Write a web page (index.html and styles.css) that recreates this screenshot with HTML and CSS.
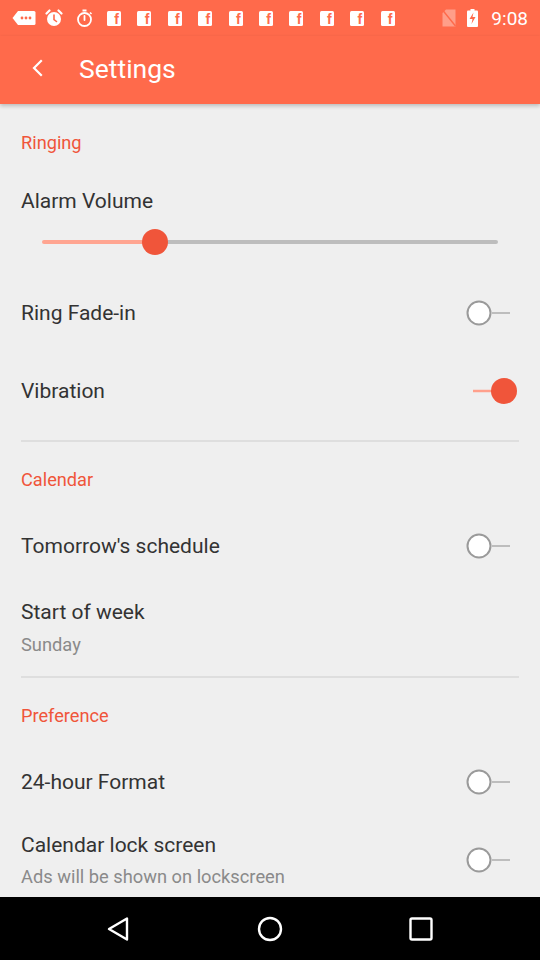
FILE: index.html
```html
<!DOCTYPE html>
<html>
<head>
<meta charset="utf-8">
<link rel="stylesheet" href="styles.css">
</head>
<body>
<div class="screen">
  <div class="statusbar">
    <div class="status-left">
      <svg class="si" width="24" height="16" viewBox="0 0 24 16"><path d="M6 1h16a1.5 1.5 0 0 1 1.5 1.5v11A1.5 1.5 0 0 1 22 15H6L0.5 8z" fill="#fff"/><circle cx="10" cy="8" r="1.4" fill="#ff6a4b"/><circle cx="14" cy="8" r="1.4" fill="#ff6a4b"/><circle cx="18" cy="8" r="1.4" fill="#ff6a4b"/></svg>
      <svg class="si" width="18" height="18" viewBox="0 0 18 18"><circle cx="9" cy="10" r="7" fill="#fff"/><path d="M1.5 4.5l3-3M16.5 4.5l-3-3" stroke="#fff" stroke-width="2.2" stroke-linecap="round"/><path d="M9 6v4.5l2.5 2" stroke="#ff6a4b" stroke-width="1.6" fill="none" stroke-linecap="round"/></svg>
      <svg class="si" width="17" height="18" viewBox="0 0 17 18"><circle cx="8.5" cy="10.5" r="6.5" fill="none" stroke="#fff" stroke-width="1.8"/><rect x="6.5" y="0.5" width="4" height="2" fill="#fff"/><path d="M8.5 7v4" stroke="#fff" stroke-width="1.8" stroke-linecap="round"/><path d="M14 3.5l1.5 1.5" stroke="#fff" stroke-width="1.6"/></svg>
      <div class="fb-row">
        <span class="fb">f</span><span class="fb">f</span><span class="fb">f</span><span class="fb">f</span><span class="fb">f</span><span class="fb">f</span><span class="fb">f</span><span class="fb">f</span><span class="fb">f</span><span class="fb">f</span>
      </div>
    </div>
    <div class="status-right">
      <svg width="14" height="18" viewBox="0 0 14 18"><path d="M4 0.5h9.5v17H0.5V4z" fill="#fff" opacity="0.35"/><path d="M0.5 1l13 16" stroke="#ff6a4b" stroke-width="1.5"/></svg>
      <svg width="11" height="18" viewBox="0 0 11 18"><rect x="3.5" y="0" width="4" height="2" fill="#fff"/><rect x="0" y="1.5" width="11" height="16.5" rx="1" fill="#fff"/><path d="M6.5 3.5L2.5 10h3l-1 5 4-7h-3z" fill="#ff6a4b"/></svg>
      <span class="time">9:08</span>
    </div>
  </div>
  <div class="toolbar">
    <svg class="back" width="24" height="24" viewBox="0 0 24 24"><path d="M15 5l-7 7 7 7" fill="none" stroke="#fff" stroke-width="2.2" stroke-linecap="square"/></svg>
    <span class="title">Settings</span>
  </div>

  <div class="content">
    <div class="cat cat-first">Ringing</div>
    <div class="row-title-only">Alarm Volume</div>
    <div class="slider-row">
      <div class="slider">
        <div class="track-active" style="width:24.8%"></div>
        <div class="track-rest"></div>
        <div class="thumb" style="left:24.8%"></div>
      </div>
    </div>
    <div class="row">
      <span class="label">Ring Fade-in</span>
      <svg class="switch" width="52" height="30" viewBox="0 0 52 30"><line x1="26" y1="15" x2="44" y2="15" stroke="#bdbdbd" stroke-width="2"/><circle cx="13" cy="15" r="11.5" fill="#fff" stroke="#9a9a9a" stroke-width="2"/></svg>
    </div>
    <div class="row">
      <span class="label">Vibration</span>
      <svg class="switch" width="52" height="30" viewBox="0 0 52 30"><line x1="7" y1="15" x2="26" y2="15" stroke="#ffa08c" stroke-width="2.5"/><circle cx="38" cy="15" r="13" fill="#f0553a"/></svg>
    </div>
    <div class="divider"></div>

    <div class="cat">Calendar</div>
    <div class="row row-tall">
      <span class="label">Tomorrow's schedule</span>
      <svg class="switch" width="52" height="30" viewBox="0 0 52 30"><line x1="26" y1="15" x2="44" y2="15" stroke="#bdbdbd" stroke-width="2"/><circle cx="13" cy="15" r="11.5" fill="#fff" stroke="#9a9a9a" stroke-width="2"/></svg>
    </div>
    <div class="row-two">
      <span class="label">Start of week</span>
      <span class="sub">Sunday</span>
    </div>
    <div class="divider"></div>

    <div class="cat">Preference</div>
    <div class="row row-tall">
      <span class="label">24-hour Format</span>
      <svg class="switch" width="52" height="30" viewBox="0 0 52 30"><line x1="26" y1="15" x2="44" y2="15" stroke="#bdbdbd" stroke-width="2"/><circle cx="13" cy="15" r="11.5" fill="#fff" stroke="#9a9a9a" stroke-width="2"/></svg>
    </div>
    <div class="row row-last">
      <div class="texts">
        <span class="label">Calendar lock screen</span>
        <span class="sub">Ads will be shown on lockscreen</span>
      </div>
      <svg class="switch" width="52" height="30" viewBox="0 0 52 30"><line x1="26" y1="15" x2="44" y2="15" stroke="#bdbdbd" stroke-width="2"/><circle cx="13" cy="15" r="11.5" fill="#fff" stroke="#9a9a9a" stroke-width="2"/></svg>
    </div>
  </div>

  <div class="navbar">
    <svg width="24" height="26" viewBox="0 0 24 26"><path d="M21 2.5v21L3 13z" fill="none" stroke="#fff" stroke-width="2.4" stroke-linejoin="round"/></svg>
    <svg width="26" height="26" viewBox="0 0 26 26"><circle cx="13" cy="13" r="11" fill="none" stroke="#fff" stroke-width="2.4"/></svg>
    <svg width="24" height="24" viewBox="0 0 24 24"><rect x="1.5" y="1.5" width="21" height="21" rx="1.5" fill="none" stroke="#fff" stroke-width="2.4"/></svg>
  </div>
</div>
</body>
</html>
```

FILE: styles.css
```css
* { box-sizing: border-box; }
html, body { margin: 0; padding: 0; }
body {
  font-family: Roboto, "Noto Sans", "Liberation Sans", sans-serif;
  background: #efefef;
}
.screen {
  width: 540px;
  height: 960px;
  display: flex;
  flex-direction: column;
  background: #efefef;
  overflow: hidden;
}
.screen > * { flex: none; }
.statusbar {
  height: 36px;
  background: #ff6a4b;
  display: flex;
  align-items: center;
  justify-content: space-between;
  padding: 0 12px 0 12px;
  color: #fff;
}
.status-left { display: flex; align-items: center; gap: 0; }
.status-left .si { margin-right: 9px; }
.status-left .si:nth-child(2) { margin-right: 13px; }
.fb-row { display: flex; gap: 16.4px; margin-left: 5px; }
.fb {
  width: 14px;
  height: 15px;
  background: #fff;
  border-radius: 1.5px;
  color: #ff6a4b;
  font-family: "Liberation Sans", sans-serif;
  font-weight: bold;
  font-size: 14px;
  line-height: 17px;
  text-align: right;
  padding-right: 2px;
  overflow: hidden;
}
.status-right { display: flex; align-items: center; gap: 10px; }
.status-right svg:first-child { margin-right: 1px; }
.time { font-size: 19px; color: #fff; margin-left: 3px; }
.toolbar {
  height: 68px;
  background: #ff6a4b;
  display: flex;
  align-items: center;
  padding: 0 0 4px 26px;
  box-shadow: 0 2px 4px rgba(0,0,0,0.22);
  position: relative;
  z-index: 1;
}
.back { margin-right: 29px; }
.title { color: #fff; font-size: 26.5px; }
.screen > .content {
  flex: 1 1 auto;
  padding: 0 21px;
  display: flex;
  flex-direction: column;
}
.content > * { flex: none; }
.cat {
  height: 54px;
  display: flex;
  align-items: center;
  color: #f0553a;
  font-size: 18.2px;
}
.cat-first { height: 76px; }
.row-title-only {
  height: 42px;
  display: flex;
  align-items: center;
  font-size: 21px;
  color: #333;
}
.slider-row {
  height: 52px;
  padding: 14px 21px 0 21px;
}
.slider {
  position: relative;
  height: 12px;
  display: flex;
  align-items: center;
}
.track-active { height: 4px; background: #ffa591; border-radius: 2px 0 0 2px; }
.track-rest { flex: 1; height: 4px; background: #bdbdbd; border-radius: 0 2px 2px 0; }
.thumb {
  position: absolute;
  top: 50%;
  width: 26px;
  height: 26px;
  margin: -13px 0 0 -13px;
  border-radius: 50%;
  background: #f0553a;
}
.row {
  height: 78px;
  display: flex;
  align-items: center;
  justify-content: space-between;
}
.row-tall { height: 80px; }
.label { font-size: 21px; color: #333; }
.sub { font-size: 18.3px; color: #8a8a8a; }
.switch { margin-right: 1px; flex: none; }
.divider {
  height: 22px;
  display: flex;
  align-items: center;
}
.divider::after {
  content: "";
  flex: 1;
  height: 2px;
  background: #dedede;
}
.row-two {
  height: 80px;
  display: flex;
  flex-direction: column;
  justify-content: center;
  gap: 10px;
  padding-top: 3px;
}
.row-last { height: 75px; }
.texts { display: flex; flex-direction: column; gap: 9px; }
.navbar {
  height: 63px;
  background: #000;
  display: flex;
  align-items: center;
  justify-content: space-between;
  padding: 0 107px 0 106px;
}
```
